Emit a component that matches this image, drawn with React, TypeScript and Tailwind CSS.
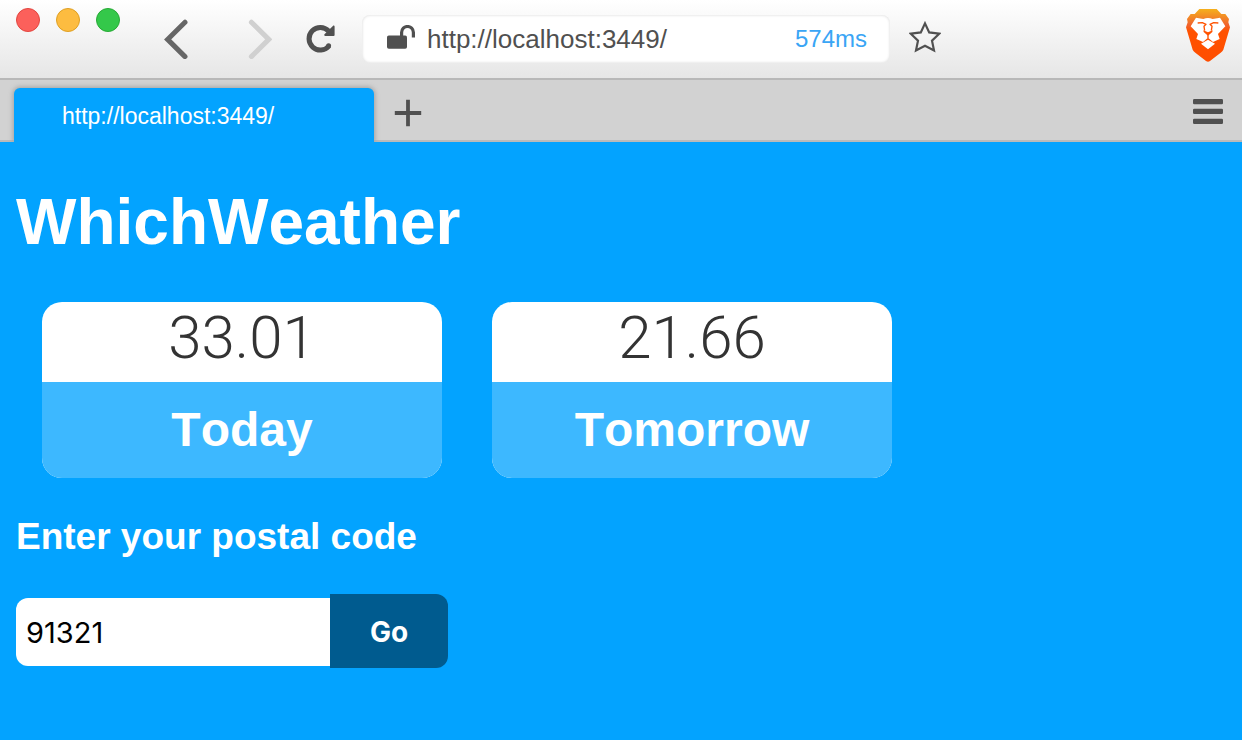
import { useState } from "react";

function ReloadIcon() {
  return (
    <svg viewBox="0 0 30 30" className="size-[30px]" aria-hidden="true">
      <path d="M22.6 7A11.3 11.3 0 1 0 23 22" fill="none" stroke="#505050" strokeWidth="5" strokeLinecap="butt" />
      <circle cx="22.6" cy="21.8" r="2.5" fill="#505050" />
      <path d="M28.6 2.6v8.3a1 1 0 0 1-1 1h-8.4a1 1 0 0 1-.7-1.7L26.9 2c.7-.7 1.7-.4 1.7.6Z" fill="#505050" />
    </svg>
  );
}

function UnlockIcon() {
  return (
    <svg viewBox="0 0 28 28" className="size-7 shrink-0" aria-hidden="true">
      <rect x="0" y="10.5" width="20" height="13.2" rx="1.8" fill="#505050" />
      <path d="M14.6 11.5V7.4a5.9 5.9 0 0 1 11.8 0v5" fill="none" stroke="#505050" strokeWidth="3.2" />
    </svg>
  );
}

function StarIcon() {
  return (
    <svg viewBox="0 0 32 32" className="size-8" aria-hidden="true">
      <path
        d="M16 2.4 L20.2 11.4 L30.2 12.7 L23 19.6 L25 29.4 L16 24.8 L7 29.4 L9 19.6 L1.8 12.7 L11.8 11.4Z"
        fill="none"
        stroke="#505050"
        strokeWidth="2.2"
      />
    </svg>
  );
}

function LionLogo() {
  return (
    <svg viewBox="108 24 132 165" className="h-[55px] w-11" aria-hidden="true">
      <defs>
        <linearGradient id="mane" x1="0" y1="0" x2="0" y2="1">
          <stop offset="0" stopColor="#f5b01c" />
          <stop offset="0.3" stopColor="#f0642f" />
          <stop offset="0.42" stopColor="#ff5200" />
          <stop offset="1" stopColor="#ff4d00" />
        </linearGradient>
      </defs>
      <path
        d="M148 27H200L214 42H226L237 57L235 67L240 82L220 149Q218 154 212 158L180 183Q174 188 168 183L136 158Q130 154 128 149L108 82L113 67L111 57L122 42H134Z"
        fill="url(#mane)"
      />
      <path
        d="M138 53L160 57Q174 51 188 57L210 53L226 79L204 102L209 117L189 126L174 113L159 126L139 117L144 102L122 79Z"
        fill="#fff"
      />
      <path d="M174 119L195 131L174 148L153 131Z" fill="#fff" />
      <path
        d="M143 69L157 68L168 73L162 79L164 92M205 69L191 68L180 73L186 79L184 92M174 101V114"
        fill="none"
        stroke="#ff5200"
        strokeWidth="4"
        strokeLinejoin="round"
      />
      <path d="M160 91L174 97L188 91L187 96L174 107L161 96Z" fill="#ff5200" />
    </svg>
  );
}

function WeatherCard({ value, label }: { value: string; label: string }) {
  return (
    <section className="w-[400px] overflow-hidden rounded-[20px] bg-white text-center">
      <p className="h-20 font-[Roboto,sans-serif] text-[60px] leading-[72px] font-light text-[#333333]">{value}</p>
      <h2 className="bg-[#3db8ff] text-5xl leading-[96px] font-bold text-white">{label}</h2>
    </section>
  );
}

function Toolbar() {
  return (
    <header className="flex h-20 items-center border-b-2 border-[#b8b8b8] bg-linear-to-b from-white to-[#e6e6e6] pr-3">
      <div className="flex gap-4 self-start pt-2 pl-4">
        <button aria-label="Close" className="size-6 rounded-full border border-[#e2463f] bg-[#fc605b]" />
        <button aria-label="Minimize" className="size-6 rounded-full border border-[#dfa023] bg-[#fdbc40]" />
        <button aria-label="Zoom" className="size-6 rounded-full border border-[#27aa35] bg-[#34c84a]" />
      </div>
      <nav aria-label="History" className="ml-11 flex items-center">
        <button aria-label="Back">
          <svg viewBox="0 0 24 40" className="h-10 w-6" aria-hidden="true">
            <path d="M21 3.2 3.6 20.4 21 37.6" fill="none" stroke="#666" strokeWidth="5" strokeLinecap="round" />
          </svg>
        </button>
        <button aria-label="Forward" className="ml-[60px]">
          <svg viewBox="0 0 24 40" className="h-10 w-6" aria-hidden="true">
            <path d="M3.4 3.2 20.8 20.4 3.4 37.6" fill="none" stroke="#d0d0d0" strokeWidth="5" strokeLinecap="round" />
          </svg>
        </button>
        <button aria-label="Reload" className="ml-[34px]">
          <ReloadIcon />
        </button>
      </nav>
      <div className="ml-[26px] flex h-12 w-[528px] items-center rounded-lg bg-white pr-[23px] pl-[25px] shadow-[inset_0_0_3px_#d4d4d4]">
        <UnlockIcon />
        <input
          aria-label="Address"
          defaultValue="http://localhost:3449/"
          className="ml-3 min-w-0 flex-1 bg-transparent text-[26px] text-[#505050] outline-none"
        />
        <span className="text-2xl text-[#3aa5f5]">574ms</span>
      </div>
      <button aria-label="Bookmark" className="mb-1 ml-[19px]">
        <StarIcon />
      </button>
      <button aria-label="Shields" className="mb-2 ml-auto">
        <LionLogo />
      </button>
    </header>
  );
}

function TabBar() {
  return (
    <div className="flex h-[62px] items-end overflow-hidden bg-[#d2d2d2] pl-3.5 shadow-[inset_0_-2px_0_#bababa]">
      <a
        href="#page"
        className="flex h-[54px] w-[360px] items-center rounded-t-md bg-[#03a3ff] pt-0.5 pl-12 text-[23px] text-white shadow-[0_0_5px_1px_#a0a0a0]"
      >
        http://localhost:3449/
      </a>
      <button aria-label="New tab" className="mb-[15px] ml-5">
        <svg viewBox="0 0 28 28" className="size-7" aria-hidden="true">
          <path d="M14 .8v26.4M.8 14h26.4" stroke="#505050" strokeWidth="3.8" />
        </svg>
      </button>
      <button aria-label="Menu" className="mr-[19px] mb-[17px] ml-auto">
        <svg viewBox="0 0 30 26" className="h-[26px] w-[30px]" aria-hidden="true">
          <rect y="0" width="30" height="5.2" rx="1.2" fill="#505050" />
          <rect y="9.8" width="30" height="5.2" rx="1.2" fill="#505050" />
          <rect y="19.8" width="30" height="5.2" rx="1.2" fill="#505050" />
        </svg>
      </button>
    </div>
  );
}

export default function App() {
  const [postalCode, setPostalCode] = useState("91321");

  return (
    <div className="flex min-h-screen flex-col bg-[#d2d2d2] font-['Liberation_Sans',Arial,sans-serif] [font-kerning:none]">
      <Toolbar />
      <TabBar />
      <main id="page" className="flex-1 bg-[#03a3ff] px-4 pt-12 pb-12 text-white">
        <h1 className="text-[64px] leading-[64px] font-bold">WhichWeather</h1>
        <div className="mt-12 ml-[26px] flex flex-wrap gap-[50px]">
          <WeatherCard value="33.01" label="Today" />
          <WeatherCard value="21.66" label="Tomorrow" />
        </div>
        <h3 className="mt-10 text-[37px] leading-[38px] font-bold">
          <label htmlFor="postal-code">Enter your postal code</label>
        </h3>
        <form className="mt-[38px] flex items-center font-[Inter,sans-serif] text-[28px]" onSubmit={(e) => e.preventDefault()}>
          <input
            id="postal-code"
            value={postalCode}
            onChange={(e) => setPostalCode(e.target.value)}
            className="mt-0.5 h-[68px] w-[314px] rounded-l-xl bg-white px-2.5 text-[29px] text-black outline-none"
          />
          <button type="submit" className="h-[74px] w-[118px] rounded-r-xl bg-[#005b8f] pt-0.5 font-bold text-white">
            Go
          </button>
        </form>
      </main>
    </div>
  );
}
